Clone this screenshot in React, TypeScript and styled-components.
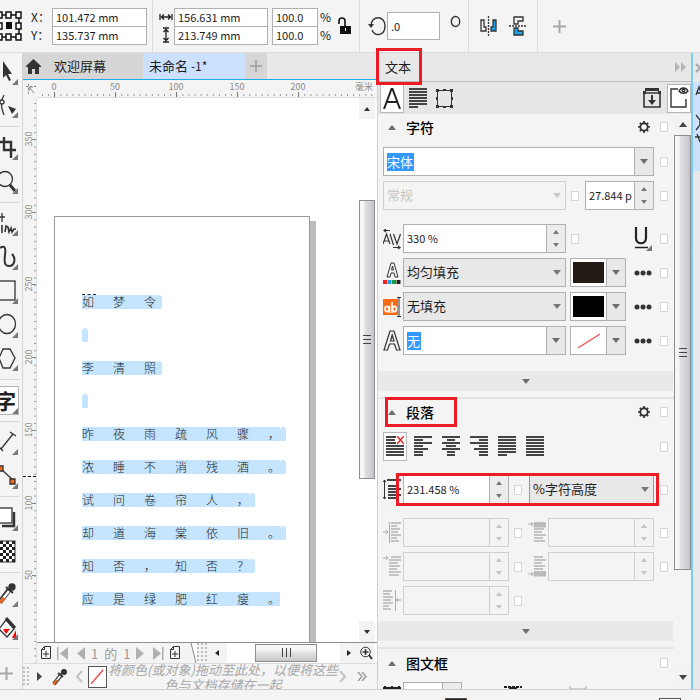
import React from "react";
import styled, { createGlobalStyle, css } from "styled-components";

const GlobalStyle = createGlobalStyle`
  * { box-sizing: border-box; }
  body { margin: 0; overflow: hidden; }
  body, button, input, select {
    font-family: "Noto Sans CJK SC", "Liberation Sans", sans-serif;
    font-size: 11px;
    color: #1c1c1c;
  }
  button { border: 0; padding: 0; background: none; display: flex; align-items: center; justify-content: center; }
  svg { display: block; flex: none; }
`;

const AppFrame = styled.div`
  display: flex;
  flex-direction: column;
  height: 100vh;
  background: #f4f4f4;
  overflow: hidden;
`;

/* ---------- property bar ---------- */

const PropertyBar = styled.header`
  display: flex;
  align-items: center;
  height: 53px;
  flex: none;
  border-bottom: 1px solid #dcdcdc;
`;

const BarGroup = styled.div<{ $gap?: number; $left?: number; $right?: number; $divided?: boolean }>`
  display: flex;
  align-items: center;
  height: 52px;
  flex: none;
  gap: ${(p) => p.$gap ?? 0}px;
  padding-left: ${(p) => p.$left ?? 0}px;
  padding-right: ${(p) => p.$right ?? 0}px;
  border-right: ${(p) => (p.$divided ? "1px solid #dcdcdc" : "0")};
`;

const Stack = styled.div<{ $width?: number }>`
  display: flex;
  flex-direction: column;
  width: ${(p) => (p.$width ? `${p.$width}px` : "auto")};
`;

const StackCell = styled.label`
  display: flex;
  align-items: center;
  height: 18px;
  font-size: 12px;
  line-height: 18px;
  white-space: nowrap;
`;

const BarInput = styled.input<{ $height?: number; $joined?: boolean }>`
  width: 100%;
  height: ${(p) => p.$height ?? 19}px;
  margin-top: ${(p) => (p.$joined ? -1 : 0)}px;
  padding: 0 3px;
  border: 1px solid #b0b0b0;
  border-radius: 0;
  background: #fff;
  outline: 0;
`;

/* ---------- tool box ---------- */

const Body = styled.div`
  display: flex;
  flex: 1;
  min-height: 0;
`;

const ToolBox = styled.nav`
  display: flex;
  flex-direction: column;
  width: 23px;
  flex: none;
  overflow: hidden;
  border-right: 1px solid #d4d4d4;
`;

const Tool = styled.button<{ $h: number }>`
  width: 20px;
  height: ${(p) => p.$h}px;
  flex: none;
  justify-content: flex-start;
`;

const TextTool = styled.button`
  position: relative;
  width: 19px;
  height: 29px;
  flex: none;
  margin: 6px 0;
  overflow: hidden;
  border: 1px solid #b4b4b4;
  border-left: 0;
  background: #fff;
  justify-content: flex-end;
  padding-right: 2px;
  font-size: 21px;
  font-weight: 700;
  line-height: 27px;
  color: #222;
  svg { position: absolute; right: 0; bottom: 0; }
`;

const ToolDivider = styled.div`
  height: 1px;
  width: 19px;
  flex: none;
  background: #d8d8d8;
`;

/* ---------- document ---------- */

const DocumentArea = styled.main`
  display: flex;
  flex-direction: column;
  flex: 1;
  min-width: 0;
  background: #f4f4f4;
`;

const TabBar = styled.div`
  display: flex;
  height: 27px;
  flex: none;
  background: #e8e8e8;
  border-bottom: 1px solid #1badea;
`;

const DocTab = styled.button<{ $active?: boolean; $width: number; $pad?: number }>`
  width: ${(p) => p.$width}px;
  height: 26px;
  background: ${(p) => (p.$active ? "#cce0ff" : "#d6d6d6")};
  justify-content: ${(p) => (p.$pad === undefined ? "center" : "flex-start")};
  padding-left: ${(p) => p.$pad ?? 0}px;
  font-size: 13px;
  line-height: 24px;
  white-space: pre;
  small { font-size: 12px; }
`;

const Workspace = styled.div`
  display: grid;
  grid-template-columns: 14px 1fr;
  grid-template-rows: 18px 1fr;
  flex: 1;
  min-height: 0;
`;

const RulerBox = styled.div<{ $vertical?: boolean }>`
  overflow: hidden;
  min-width: 0;
  min-height: 0;
  border-right: ${(p) => (p.$vertical ? "1px solid #dcdcdc" : "0")};
  border-bottom: ${(p) => (p.$vertical ? "0" : "1px solid #dcdcdc")};
  text { font-size: 9px; fill: #8a8a8a; }
`;

const View = styled.div`
  display: flex;
  flex-direction: column;
  min-width: 0;
  min-height: 0;
`;

const CanvasRow = styled.div`
  display: flex;
  flex: 1;
  min-height: 0;
  padding-right: 2px;
  background: #fff;
  border-bottom: 1px solid #8f8f8f;
`;

const Canvas = styled.div`
  flex: 1;
  min-width: 0;
  overflow: hidden;
  padding: 118px 49px 0 17px;
`;

const Page = styled.article`
  height: 100%;
  padding: 78px 0 0 27px;
  border: 1px solid #999;
  border-bottom: 0;
  box-shadow: 6px 5px 0 #bdbdbd;
  background: #fff;
`;

const PoemLine = styled.div`
  display: flex;
  align-items: flex-end;
  height: 14px;
  margin-bottom: 19px;
  font-size: 12px;
  font-weight: 300;
  line-height: 14px;
  color: #222;
`;

const Glyphs = styled.span`
  display: flex;
  gap: 19px;
  height: 14px;
  background: #c5e5ff;
  span { width: 12px; line-height: 13px; }
`;

const CaretMark = styled.div`
  width: 14px;
  margin-top: -1px;
  border-top: 1px dashed #222;
`;

const LineEnd = styled.i`
  width: 6px;
  height: 14px;
  border-radius: 3px 3px 1px 1px;
  background: #c5e5ff;
`;

const VScroll = styled.div<{ $width: number }>`
  display: flex;
  flex-direction: column;
  width: ${(p) => p.$width}px;
  flex: none;
`;

const ScrollButton = styled.button<{ $w?: number; $h?: number }>`
  width: ${(p) => (p.$w ? `${p.$w}px` : "100%")};
  height: ${(p) => p.$h ?? 21}px;
  flex: none;
  background: #f3f3f3;
`;

const Space = styled.div<{ $grow: number }>`
  flex: ${(p) => p.$grow} 1 0;
`;

const thumb = css`
  display: flex;
  align-items: center;
  justify-content: center;
  border: 1px solid #8e8e8e;
`;

const VThumb = styled.div<{ $grow: number }>`
  ${thumb}
  flex: ${(p) => p.$grow} 1 0;
  background: linear-gradient(90deg, #f6f6f6 0 25%, #dedee0 40%, #d2d2d6 75%, #c2c2c8);
`;

const HThumb = styled.div`
  ${thumb}
  width: 62px;
  height: 18px;
  background: linear-gradient(#f6f6f6 0 25%, #dedede 55%, #c8c8c8);
`;

const NavRow = styled.div`
  display: flex;
  align-items: center;
  height: 20px;
  flex: none;
  padding-right: 2px;
  background: #fff;
`;

const PageTab = styled.div`
  display: flex;
  align-items: center;
  gap: 6px;
  width: 151px;
  height: 20px;
  padding-left: 4px;
  flex: none;
  background: #f4f4f4;
`;

const PageCount = styled.span`
  display: flex;
  gap: 6px;
  font-size: 13px;
  line-height: 19px;
  color: #9a9a9a;
`;

const Grip = styled.div<{ $w: number }>`
  width: ${(p) => p.$w}px;
  height: 20px;
  flex: none;
  background: radial-gradient(circle at 1px 1px, #bdbdbd 1px, transparent 1px) 0 0 / 4px 4px #f4f4f4;
`;

const Palette = styled.div`
  display: flex;
  align-items: center;
  height: 26px;
  flex: none;
  border-top: 1px solid #dcdcdc;
  overflow: hidden;
`;

const PaletteHint = styled.p`
  flex: 1;
  height: 25px;
  margin: 0;
  overflow: hidden;
  display: flex;
  align-items: center;
  justify-content: center;
  text-align: center;
  font-size: 13px;
  font-style: italic;
  line-height: 15px;
  color: #a6a6a6;
  white-space: nowrap;
`;

const NoColor = styled.button`
  width: 19px;
  height: 22px;
  border: 1px solid #555;
  background: #fff;
`;

/* ---------- docker ---------- */

const Docker = styled.aside`
  display: flex;
  flex-direction: column;
  width: 314px;
  flex: none;
  border-left: 1px solid #d0d0d0;
`;

const DockerTitle = styled.div`
  position: relative;
  display: flex;
  align-items: center;
  justify-content: space-between;
  height: 29px;
  flex: none;
  padding: 0 5px 1px 7px;
  background: #e8e8e8;
  border-bottom: 1px solid #bcbcbc;
  font-size: 13px;
`;

const Marker = styled.span<{ $t: number; $r?: number; $b: number; $l: number; $w?: number }>`
  position: absolute;
  z-index: 2;
  top: ${(p) => p.$t}px;
  bottom: ${(p) => p.$b}px;
  left: ${(p) => p.$l}px;
  ${(p) => (p.$w ? `width: ${p.$w}px;` : `right: ${p.$r}px;`)}
  border: 3px solid #ed1c24;
  pointer-events: none;
`;

const DockerTools = styled.div`
  display: flex;
  align-items: center;
  height: 32px;
  flex: none;
  padding-left: 2px;
  background: #e6e6e6;
`;

const ModeButton = styled.button<{ $on?: boolean; $w: number }>`
  width: ${(p) => p.$w}px;
  height: 29px;
  border: 1px solid ${(p) => (p.$on ? "#b8b8b8" : "transparent")};
  background: ${(p) => (p.$on ? "#fff" : "none")};
`;

const DockerBody = styled.div`
  display: flex;
  flex: 1;
  min-height: 0;
`;

const Sections = styled.div`
  flex: 1;
  min-width: 0;
  overflow: hidden;
`;

const Section = styled.section<{ $line?: boolean }>`
  border-top: ${(p) => (p.$line ? "2px solid #e4e4e4" : "0")};
  padding: 0 6px 0 5px;
`;

const SectionHead = styled.div<{ $h: number }>`
  position: relative;
  display: flex;
  align-items: center;
  height: ${(p) => p.$h}px;
  h2 {
    flex: 1;
    margin: 0 0 0 10px;
    font-size: 14px;
    font-weight: 500;
    line-height: 20px;
    color: #000;
  }
  > svg:first-child { margin-left: 5px; }
`;

const Rows = styled.div<{ $top?: number; $gap?: number }>`
  display: flex;
  flex-direction: column;
  gap: ${(p) => p.$gap ?? 5}px;
  padding-top: ${(p) => p.$top ?? 0}px;
`;

const Row = styled.div<{ $cols: string }>`
  position: relative;
  display: grid;
  grid-template-columns: ${(p) => p.$cols};
  align-items: center;
  height: 29px;
`;

const Side = styled.div<{ $pad?: number; $between?: boolean }>`
  display: flex;
  align-items: center;
  justify-content: ${(p) => (p.$between ? "space-between" : "flex-start")};
  gap: 6px;
  padding: 0 ${(p) => (p.$between ? 2 : 0)}px 0 ${(p) => p.$pad ?? 5}px;
`;

const CheckBox = styled.input.attrs({ type: "checkbox" })`
  appearance: none;
  width: 8px;
  height: 10px;
  margin: 0;
  flex: none;
  border: 1px solid #d6d6d6;
  background: #fff;
`;

const EndCheck = styled(CheckBox)`
  justify-self: end;
`;

const Field = styled.div<{ $off?: boolean; $gray?: boolean; $focus?: boolean }>`
  display: flex;
  align-items: center;
  height: 29px;
  width: 100%;
  min-width: 0;
  border: 1px solid ${(p) => (p.$focus ? "#3fb6f0" : p.$off ? "#d0d0d0" : "#b0b0b0")};
  background: ${(p) => (p.$off ? "#f4f4f4" : p.$gray ? "#e8e8e8" : "#fff")};
`;

const TextBox = styled.input`
  flex: 1;
  min-width: 0;
  height: 27px;
  padding: 0 0 2px 3px;
  border: 0;
  outline: 0;
  background: transparent;
`;

const PickedText = styled.input<{ $w: number }>`
  width: ${(p) => p.$w}px;
  height: 18px;
  margin: 0 auto 0 3px;
  padding: 0;
  border: 0;
  outline: 0;
  background: #3399ff;
  color: #fff;
  font-size: 13px;
  line-height: 18px;
`;

const SelectWrap = styled.label<{ $off?: boolean }>`
  position: relative;
  display: flex;
  align-items: center;
  flex: 1;
  min-width: 0;
  select {
    appearance: none;
    width: 100%;
    height: 27px;
    padding: 0 0 2px 3px;
    border: 0;
    outline: 0;
    background: transparent;
    font-size: 13px;
    color: ${(p) => (p.$off ? "#c4c4c4" : "#1c1c1c")};
    opacity: 1;
  }
  svg { position: absolute; right: 4px; pointer-events: none; }
`;

const DropButton = styled.button`
  width: 19px;
  height: 27px;
  flex: none;
  border-left: 1px solid #b0b0b0;
  background: #e8e8e8;
`;

const Spinner = styled.div<{ $off?: boolean }>`
  display: flex;
  flex-direction: column;
  width: 19px;
  height: 27px;
  flex: none;
  border-left: 1px solid ${(p) => (p.$off ? "#d0d0d0" : "#b0b0b0")};
  background: ${(p) => (p.$off ? "#f4f4f4" : "#ececec")};
  button { flex: 1; }
`;

const Swatch = styled.div<{ $color: string }>`
  display: flex;
  align-items: center;
  justify-content: center;
  width: 31px;
  height: 21px;
  margin: 0 2px;
  flex: none;
  background: ${(p) => p.$color};
`;

const SwatchField = styled(Field)`
  width: 56px;
`;

const MoreBar = styled.button`
  display: flex;
  width: calc(100% - 1px);
  height: 20px;
  background: #e9e9e9;
`;

const AlignRow = styled.div`
  display: flex;
  align-items: center;
  height: 29px;
  gap: 4px;
  > input { margin-left: auto; }
`;

const SideStrip = styled.div`
  display: flex;
  flex-direction: column;
  width: 9px;
  flex: none;
  overflow: hidden;
  border-left: 2px solid #7accfa;
  background: #e8e8e8;
`;

const StripTop = styled.div`
  height: 29px;
  margin-left: -2px;
  flex: none;
  background: #e8e8e8;
  display: flex;
  align-items: center;
  justify-content: flex-end;
  overflow: hidden;
`;

const StripTab = styled.div`
  height: 89px;
  flex: none;
  background: #cce0ff;
  overflow: hidden;
`;

const StatusBar = styled.footer`
  display: flex;
  justify-content: flex-end;
  height: 11px;
  flex: none;
  padding: 8px 19px 0 0;
  gap: 192px;
  border-top: 1px solid #cfcfcf;
  overflow: hidden;
`;

const StatusSwatch = styled.div<{ $fill: string }>`
  width: 22px;
  height: 14px;
  flex: none;
  border: 1px solid #555;
  background: ${(p) => p.$fill};
`;

/* ---------- small drawings ---------- */

const Arrow = ({ dir = "down", w = 8, c = "#6e6e6e" }: { dir?: "up" | "down" | "left" | "right"; w?: number; c?: string }) => {
  const h = Math.round(w * 0.6);
  const flat = dir === "up" || dir === "down";
  const d = {
    down: `M0 0h${w}l${-w / 2} ${h}z`,
    up: `M0 ${h}h${w}l${-w / 2} ${-h}z`,
    left: `M${h} 0v${w}l${-h} ${-w / 2}z`,
    right: `M0 0v${w}l${h} ${-w / 2}z`,
  }[dir];
  return (
    <svg width={flat ? w : h} height={flat ? h : w} aria-hidden="true">
      <path d={d} fill={c} />
    </svg>
  );
};

const ToolIcon = ({ h, tri, children }: { h: number; tri?: number; children: React.ReactNode }) => (
  <svg width="20" height={h} viewBox={`0 0 20 ${h}`} fill="none" stroke="#333" strokeWidth="1.3">
    {children}
    {tri && <path d={`M18 ${tri - 6}v6h-6z`} fill="#777" stroke="none" />}
  </svg>
);

const Lines = ({ rows, color = "#444", children }: { rows: [number, number][]; color?: string; children?: React.ReactNode }) => (
  <svg width="18" height="21" viewBox="0 0 18 21">
    {rows.map(([a, b], i) => (
      <rect key={i} x={a} y={i * 3} width={b - a} height="2" fill={color} />
    ))}
    {children}
  </svg>
);

const full: [number, number] = [0, 18];
const alignments: { name: string; rows: [number, number][] }[] = [
  { name: "左", rows: [full, [0, 9], full, [0, 9], [0, 14], [0, 9], [0, 9]] },
  { name: "中", rows: [full, [5, 13], full, [4, 14], full, [5, 13], [5, 13]] },
  { name: "右", rows: [full, [9, 18], full, [9, 18], [4, 18], [9, 18], [9, 18]] },
  { name: "两端对齐", rows: [full, full, full, full, full, full, [0, 9]] },
  { name: "强制两端对齐", rows: [full, full, full, full, full, full, full] },
];

const Gear = () => (
  <svg width="12" height="12" viewBox="0 0 12 12" fill="none" stroke="#333">
    <circle cx="6" cy="6" r="3.7" strokeWidth="1.9" />
    <path d="M6 0v2M6 10v2M0 6h2M10 6h2M1.8 1.8l1.4 1.4M8.8 8.8l1.4 1.4M1.8 10.2l1.4-1.4M8.8 3.2l1.4-1.4" strokeWidth="1.7" />
  </svg>
);

const Dots = () => (
  <svg width="18" height="6" fill="#333">
    <circle cx="3" cy="3" r="2.5" />
    <circle cx="9" cy="3" r="2.5" />
    <circle cx="15" cy="3" r="2.5" />
  </svg>
);

const ThreeLines = ({ vertical }: { vertical?: boolean }) => (
  <svg width="10" height="10" stroke="#444" strokeWidth="1">
    <path d={vertical ? "M1.5 0v9M5.5 0v9M9.5 0v9" : "M1 1.5h8M1 5.5h8M1 9.5h8"} />
  </svg>
);

const Dropper = () => (
  <svg width="16" height="18" viewBox="0 0 16 18">
    <path d="M2 16 9 7" stroke="#333" strokeWidth="4" />
    <path d="M3 14.5 9 7" stroke="#fff" strokeWidth="1.8" />
    <path d="M1.5 16.5 5 12" stroke="#e8641b" strokeWidth="2.4" />
    <path d="m6 5 5 4M9 6l3-4" stroke="#333" strokeWidth="2" />
    <circle cx="12" cy="4" r="3" fill="#333" />
  </svg>
);

const PlusIcon = ({ size = 14 }: { size?: number }) => (
  <svg width={size} height={size} stroke="#a8a8a8" strokeWidth="2">
    <path d={`M${size / 2} 0v${size}M0 ${size / 2}h${size}`} />
  </svg>
);

const AddPage = () => (
  <svg width="10" height="14" fill="none" stroke="#333">
    <path d="M3.5.5h6v12h-9v-9zM.5 3.5h3v-3M5 5v6M2 8h6" />
  </svg>
);

const Range = ({ vertical }: { vertical?: boolean }) => (
  <svg width="14" height="16" viewBox="0 0 14 16" fill="none" stroke="#222" strokeWidth="1.3">
    {vertical ? (
      <path d="M4 1h6M4 15h6M7 2v12M4.5 5 7 2.5 9.5 5M4.5 11 7 13.5 9.5 11" />
    ) : (
      <path d="M1 5v6M13 5v6M2 8h10M5 5.5 2.5 8 5 10.500M9 5.5 11.5 8 9 10.5" />
    )}
  </svg>
);

const faint = "#c4c4c4";
const indentIcons: Record<string, React.ReactNode> = {
  left: (
    <Lines color={faint} rows={[[8, 18], [8, 14], [8, 17], [8, 15], [8, 18], [8, 14], [8, 16]]}>
      <path d="M6.5 0v21M0 10h4M3 8l2 2-2 2" stroke="#aaa" fill="none" />
    </Lines>
  ),
  before: (
    <Lines color={faint} rows={[[6, 18], [6, 18], [6, 16], [6, 14], [6, 18], [6, 15], [6, 17]]}>
      <path d="M6 1h12v4H6zM0 2h5M3 0l2 2-2 2" stroke="#bbb" fill="#bbb" />
    </Lines>
  ),
  first: (
    <Lines color={faint} rows={[[8, 18], [6, 18], [6, 15], [6, 17], [6, 14], [6, 18], [6, 16]]}>
      <path d="M0 2h5M3 0l2 2-2 2" stroke="#aaa" fill="none" />
    </Lines>
  ),
  after: (
    <Lines color={faint} rows={[[6, 15], [6, 18], [6, 14], [6, 17], [6, 15], [6, 18], [6, 18]]}>
      <path d="M6 16h12v4H6zM0 18h5M3 16l2 2-2 2" stroke="#bbb" fill="#bbb" />
    </Lines>
  ),
  right: (
    <Lines color={faint} rows={[[0, 9], [0, 7], [0, 10], [0, 8], [0, 10], [0, 6], [0, 8]]}>
      <path d="M12.5 0v21M13 10h5M15 8l-2 2 2 2" stroke="#aaa" fill="none" />
    </Lines>
  ),
};

/* ---------- composed controls ---------- */

const Spin = ({ off }: { off?: boolean }) => (
  <Spinner $off={off}>
    <button aria-label="增加" disabled={off}><Arrow dir="up" w={6} c={off ? "#c4c4c4" : "#777"} /></button>
    <button aria-label="减少" disabled={off}><Arrow w={6} c={off ? "#c4c4c4" : "#777"} /></button>
  </Spinner>
);

const NumberField = ({ label, value = "", off }: { label: string; value?: string; off?: boolean }) => (
  <Field $off={off}>
    <TextBox aria-label={label} defaultValue={value} disabled={off} />
    <Spin off={off} />
  </Field>
);

const SelectField = ({ label, value, off, focus }: { label: string; value: string; off?: boolean; focus?: boolean }) => (
  <Field $off={off} $gray={!off} $focus={focus}>
    <SelectWrap $off={off}>
      <select aria-label={label} disabled={off} defaultValue={value}>
        <option>{value}</option>
      </select>
      <Arrow c={off ? "#c8c8c8" : "#777"} />
    </SelectWrap>
  </Field>
);

const ColorField = ({ label, color, none }: { label: string; color: string; none?: boolean }) => (
  <SwatchField>
    <Swatch $color={color}>
      {none && <svg width="22" height="15"><path d="M0 15 22 1" stroke="#f05050" strokeWidth="1.3" /></svg>}
    </Swatch>
    <DropButton aria-label={label}><Arrow /></DropButton>
  </SwatchField>
);

const checkerCells = Array.from({ length: 35 }, (_, i) => [i % 5, Math.floor(i / 5)]).filter(([x, y]) => (x + y) % 2 === 0);

const Tools = () => (
  <ToolBox aria-label="工具箱">
    <Tool $h={35} aria-label="选择"><ToolIcon h={35} tri={32}><path d="M3 8v17l3-3 3 6 2-1-3-6h4z" fill="#333" stroke="none" /></ToolIcon></Tool>
    <Tool $h={38} aria-label="形状"><ToolIcon h={38} tri={30}><path d="M4 7C0 13 1 20 4 27" /><circle cx="2" cy="14" r="2" fill="#fff" /><path d="m8 18 8 3-4 5z" fill="#333" stroke="none" /></ToolIcon></Tool>
    <ToolDivider />
    <Tool $h={38} aria-label="裁剪"><ToolIcon h={38} tri={33}><path d="M4 10v13h12M0 15h11v16" strokeWidth="2.4" /></ToolIcon></Tool>
    <Tool $h={37} aria-label="缩放"><ToolIcon h={37} tri={29}><circle cx="5" cy="14" r="7.5" /><path d="m10 20 5 6" strokeWidth="3" /></ToolIcon></Tool>
    <ToolDivider />
    <Tool $h={35} aria-label="手绘"><ToolIcon h={35} tri={33}><path d="M2 10v9M0 14h5" /><path d="M2 22v8M5 29l1-6 2 1 1 5 2-4 1 4 2-3h2" strokeWidth="1.6" /></ToolIcon></Tool>
    <Tool $h={33} aria-label="艺术笔"><ToolIcon h={33} tri={32}><path d="M0 10c5-3 6 0 5 7-1 8 0 11 4 11 6 0 7-8 3-12" strokeWidth="2" /></ToolIcon></Tool>
    <Tool $h={33} aria-label="矩形"><ToolIcon h={33} tri={33}><rect x="-3" y="10" width="18" height="19" /></ToolIcon></Tool>
    <Tool $h={34} aria-label="椭圆"><ToolIcon h={34} tri={34}><ellipse cx="7" cy="20" rx="8.5" ry="9.5" /></ToolIcon></Tool>
    <Tool $h={41} aria-label="多边形"><ToolIcon h={41} tri={33}><path d="M3 11h7l5 9-5 10H3l-4-10z" /></ToolIcon></Tool>
    <ToolDivider />
    <TextTool aria-label="文本工具">字<svg width="6" height="6"><path d="M6 0v6H0z" fill="#777" /></svg></TextTool>
    <ToolDivider />
    <Tool $h={37} aria-label="度量"><ToolIcon h={37} tri={33}><path d="M1 27 13 12M10 10l6 4M-1 25l4 4" /></ToolIcon></Tool>
    <Tool $h={37} aria-label="连接线"><ToolIcon h={37} tri={30}><path d="m1 10 12 11" /><path d="M-1 7h4v5h-4zM10 20h5v5h-5z" fill="#f26a1b" /></ToolIcon></Tool>
    <ToolDivider />
    <Tool $h={38} aria-label="阴影"><ToolIcon h={38} tri={34}><path d="M14 15v14H2" strokeWidth="2.4" /><rect x="-2" y="11" width="14" height="15" fill="#fff" /></ToolIcon></Tool>
    <Tool $h={37} aria-label="透明度">
      <ToolIcon h={37}>
        <rect x="-1" y="6" width="16" height="21" fill="#fff" strokeWidth="1" />
        {checkerCells.map(([x, y]) => (
          <rect key={`${x}-${y}`} x={x * 3} y={6 + y * 3} width="3" height="3" fill="#222" stroke="none" />
        ))}
      </ToolIcon>
    </Tool>
    <ToolDivider />
    <Tool $h={37} aria-label="滴管"><ToolIcon h={37} tri={34}><path d="M0 29 9 17" strokeWidth="5" /><path d="M1 28 9 18" stroke="#fff" strokeWidth="2.4" /><path d="m0 30 4-5" stroke="#e8641b" strokeWidth="3" /><path d="m6 14 7 6" strokeWidth="2" /><circle cx="12" cy="14" r="3" fill="#333" /></ToolIcon></Tool>
    <Tool $h={38} aria-label="填充"><ToolIcon h={38} tri={30}><path d="m6 10 8 9-7 8-8-8z" fill="#fff" /><path d="m6 8 9 10" strokeWidth="3" /><path d="M3 19h7l-4 5z" fill="red" stroke="none" /><path d="M16 20v8h-4z" fill="red" stroke="none" /></ToolIcon></Tool>
    <ToolDivider />
    <Tool $h={48} aria-label="添加"><PlusIcon size={13} /></Tool>
  </ToolBox>
);

const HRuler = () => (
  <svg width="100%" height="17">
    {Array.from({ length: 140 }, (_, i) => (
      <path key={i} d={`M${5.5 + i * 6.1} 14v2`} stroke="#9a9a9a" />
    ))}
    {Array.from({ length: 5 }, (_, i) => (
      <g key={i}>
        <path d={`M${17.5 + i * 61} 12v5`} stroke="#777" />
        <text x={17 + i * 61} y="10" textAnchor="middle">{i * 50}</text>
      </g>
    ))}
    <text x="318" y="10">毫米</text>
  </svg>
);

const VRuler = () => (
  <svg width="14" height="100%">
    {Array.from({ length: 90 }, (_, i) => (
      <path key={i} d={`M11 ${5.5 + i * 7.27}h2`} stroke="#9a9a9a" />
    ))}
    {[350, 300, 250, 200, 150, 100, 50].map((n, i) => (
      <g key={n} transform={`translate(0 ${Math.round(41 + i * 72.7)})`}>
        <path d="M9 .5h4" stroke="#888" />
        <text transform="rotate(-90)" x="0" y="9" textAnchor="middle">{n}</text>
      </g>
    ))}
    <path d="M0 378.5h14" stroke="#111" strokeDasharray="3 2" />
  </svg>
);

const poem: [string, boolean][] = [
  ["如梦令", true],
  ["", true],
  ["李清照", true],
  ["", true],
  ["昨夜雨疏风骤，", true],
  ["浓睡不消残酒。", true],
  ["试问卷帘人，", true],
  ["却道海棠依旧。", true],
  ["知否，知否？", true],
  ["应是绿肥红瘦。", false],
];

const NavArrow = ({ dir, bar }: { dir: "left" | "right"; bar?: boolean }) => (
  <svg width="11" height="13" fill="#b0b0b0">
    <path d={dir === "left" ? "M11 0v13L3 6.5z" : "M0 0v13l8-6.5z"} />
    {bar && <rect x={dir === "left" ? 0 : 9} width="1.5" height="13" />}
  </svg>
);

const DocumentView = () => (
  <DocumentArea>
    <TabBar>
      <DocTab $width={20} aria-label="主页"><svg width="15" height="15"><path d="M7.5 0 15 7v1h-2v7H9v-5H6v5H2V8H0V7z" fill="#333" /></svg></DocTab>
      <DocTab $width={100} $pad={11}>欢迎屏幕</DocTab>
      <DocTab $width={102} $pad={6} $active>未命名 <small>-1*</small></DocTab>
      <DocTab $width={22} aria-label="新建"><PlusIcon size={12} /></DocTab>
    </TabBar>
    <Workspace>
      <svg width="14" height="18" fill="none" stroke="#888"><path d="M5.500 4v12M3 6.500h10" strokeDasharray="2 2" /><path d="m6 7 5 6M6 11V7h4" /></svg>
      <RulerBox><HRuler /></RulerBox>
      <RulerBox $vertical><VRuler /></RulerBox>
      <View>
        <CanvasRow>
          <Canvas>
            <Page>
              <CaretMark />
              {poem.map(([line, end], i) => (
                <PoemLine key={i}>
                  {line && <Glyphs>{[...line].map((c, j) => <span key={j}>{c}</span>)}</Glyphs>}
                  {end && <LineEnd />}
                </PoemLine>
              ))}
            </Page>
          </Canvas>
          <VScroll $width={16}>
            <ScrollButton aria-label="向上"><Arrow dir="up" w={6} c="#333" /></ScrollButton>
            <Space $grow={81} />
            <VThumb $grow={279}><ThreeLines /></VThumb>
            <Space $grow={143} />
            <ScrollButton aria-label="向下"><Arrow w={6} c="#333" /></ScrollButton>
          </VScroll>
        </CanvasRow>
        <NavRow>
          <PageTab>
            <AddPage />
            <NavArrow dir="left" bar />
            <NavArrow dir="left" />
            <PageCount><span>1</span><span>的</span><span>1</span></PageCount>
            <NavArrow dir="right" />
            <NavArrow dir="right" bar />
            <AddPage />
          </PageTab>
          <svg width="9" height="20"><path d="M0 0h3l5 20H0z" fill="#f4f4f4" /><path d="m3 0 5 20" stroke="#888" /></svg>
          <Grip $w={10} />
          <ScrollButton $w={20} $h={20} aria-label="向左"><Arrow dir="left" w={6} c="#222" /></ScrollButton>
          <Space $grow={29} />
          <HThumb><ThreeLines vertical /></HThumb>
          <Space $grow={23} />
          <ScrollButton $w={17} $h={20} aria-label="向右"><Arrow dir="right" w={6} c="#222" /></ScrollButton>
          <ScrollButton $w={18} $h={20} aria-label="导航器">
            <svg width="13" height="14" fill="none" stroke="#333"><circle cx="5.5" cy="6" r="4.8" /><path d="M5.5 3v6M2.5 6h6" strokeWidth="1.5" /><path d="m9 9 3 4" strokeWidth="2" /></svg>
          </ScrollButton>
        </NavRow>
      </View>
    </Workspace>
    <Palette>
      <Grip $w={6} />
      <BarGroup $left={8} $right={10}><Arrow dir="right" w={9} c="#444" /></BarGroup>
      <Dropper />
      <BarGroup $left={8} $right={5}><svg width="7" height="13" fill="none" stroke="#c4c4c4" strokeWidth="2"><path d="M6 1 1 6.5 6 12" /></svg></BarGroup>
      <NoColor aria-label="无颜色"><svg width="13" height="15"><path d="M0 15 12 1" stroke="#f04040" strokeWidth="1.3" /></svg></NoColor>
      <PaletteHint>将颜色(或对象)拖动至此处，以便将这些<br />色与文档存储在一起</PaletteHint>
      <BarGroup $gap={11} $right={10}>
        <svg width="7" height="13" fill="none" stroke="#c4c4c4" strokeWidth="2"><path d="m1 1 5 5.5L1 12" /></svg>
        <svg width="10" height="9" fill="none" stroke="#999" strokeWidth="1.4"><path d="m1 0 4 4.5L1 9M5 0l4 4.5L5 9" /></svg>
      </BarGroup>
    </Palette>
  </DocumentArea>
);

const charCols = "20px 1fr 88px 14px";
const paraCols = "20px 1fr 39px 1fr 14px";

const TextDocker = () => (
  <Docker>
    <DockerTitle>
      <span>文本</span>
      <Marker $t={-5} $b={-4} $l={-2} $w={46} />
      <svg width="11" height="10" fill="#b4b4b4"><path d="M0 0v10l5-5zM6 0v10l5-5z" /></svg>
    </DockerTitle>
    <DockerTools>
      <ModeButton $w={24} $on aria-label="字符">
        <svg width="18" height="21" fill="none" stroke="#222" strokeWidth="2"><path d="m1 21 7.5-20h1L17 21M4 14h10" /></svg>
      </ModeButton>
      <ModeButton $w={28} aria-label="段落">
        <Lines rows={[full, full, full, full, full, full, [0, 9]]} />
      </ModeButton>
      <ModeButton $w={24} aria-label="图文框">
        <svg width="19" height="21" fill="none" stroke="#333"><rect x="2.5" y="2.5" width="14" height="16" /><path d="M1 1h3v3H1zM15 1h3v3h-3zM1 17h3v3H1zM15 17h3v3h-3zM8 1h3v2H8zM8 18h3v2H8zM1 9h2v3H1zM16 9h2v3h-2z" fill="#333" stroke="none" /></svg>
      </ModeButton>
      <Space $grow={1} />
      <ModeButton $w={24} aria-label="导入">
        <svg width="18" height="20" fill="none" stroke="#333"><path d="M1 5h16v14H1z" strokeWidth="1.6" /><path d="M0 6V3h2V0h14v3h2v3h-3V3H3v3z" fill="#333" stroke="none" /><path d="M9 7v6" strokeWidth="2" /><path d="M5 12h8l-4 5z" fill="#333" stroke="none" /></svg>
      </ModeButton>
      <BarGroup $left={3} />
      <ModeButton $w={24} $on aria-label="显示">
        <svg width="19" height="22" fill="none" stroke="#333" strokeWidth="1.4"><path d="M8 2H1v18h15V12" /><path d="M9 4c2-4 7-4 9 0-2 3-7 3-9 0z" /><circle cx="13.5" cy="3.5" r="1.3" /></svg>
      </ModeButton>
    </DockerTools>
    <DockerBody>
      <Sections>
        <Section>
          <SectionHead $h={26}>
            <Arrow dir="up" />
            <h2>字符</h2>
            <BarGroup $gap={10}><Gear /><CheckBox aria-label="字符样式" /></BarGroup>
          </SectionHead>
          <Rows $top={7}>
            <Row $cols="1fr 14px">
              <Field>
                <PickedText $w={27} aria-label="字体" defaultValue="宋体" />
                <DropButton aria-label="字体列表"><Arrow /></DropButton>
              </Field>
              <EndCheck aria-label="锁定字体" />
            </Row>
            <Row $cols="1fr 88px 14px">
              <SelectField label="字体样式" value="常规" off />
              <Side><CheckBox aria-label="锁定样式" /><NumberField label="字体大小" value="27.844 p" /></Side>
              <EndCheck aria-label="锁定大小" />
            </Row>
          </Rows>
          <Rows $top={14}>
            <Row $cols={charCols}>
              <svg width="18" height="20" fill="none" stroke="#333" strokeWidth="1.2"><path d="M0 15 3.500 5 7 15M1.500 12h4M7 5l3.500 11M10.500 5 14 15l3.500-10" /><path d="M1 1.500h6M3 0 1 1.500 3 3M10 18.500h7M15 17l2 1.500-2 1.500" /></svg>
              <NumberField label="字距调整" value="330 %" />
              <Side $between><CheckBox aria-label="锁定字距" />
                <svg width="19" height="24" fill="none" stroke="#222"><path d="M3 0v11c0 7 10 7 10 0V0" strokeWidth="2.2" /><path d="M2 20.5h13" strokeWidth="1.5" /><path d="M19 18v6h-6z" fill="#777" stroke="none" /></svg>
              </Side>
              <EndCheck aria-label="锁定下划线" />
            </Row>
            <Row $cols={charCols}>
              <svg width="18" height="22"><path d="m4 15 4-14h3l4 14h-3l-1-4H8l-1 4zM8.5 8h2l-1-4z" fill="none" stroke="#333" /><path d="M0 18h4v4H0z" fill="#e22" /><path d="M4.5 18h4v4h-4z" fill="#19a0e8" /><path d="M9 18h4v4H9z" fill="#1b9a3a" /><path d="M13.5 18h4v4h-4z" fill="#222" /></svg>
              <SelectField label="填充类型" value="均匀填充" />
              <Side $between $pad={4}><ColorField label="填充颜色" color="#231a16" /><Dots /></Side>
              <EndCheck aria-label="锁定填充" />
            </Row>
            <Row $cols={charCols}>
              <svg width="18" height="20" fill="none"><path d="M0 2h15v16H0z" fill="#fb6a12" /><ellipse cx="4" cy="12" rx="2" ry="2.6" stroke="#fff" strokeWidth="1.6" /><path d="M6.5 9v7M9 5v11" stroke="#fff" strokeWidth="1.6" /><ellipse cx="11.5" cy="12" rx="2" ry="2.6" stroke="#fff" strokeWidth="1.6" /><path d="M14 .5h4M14 19.5h4M16 1v18" stroke="#333" /></svg>
              <SelectField label="背景填充类型" value="无填充" />
              <Side $between $pad={4}><ColorField label="背景颜色" color="#000" /><Dots /></Side>
              <EndCheck aria-label="锁定背景" />
            </Row>
            <Row $cols={charCols}>
              <svg width="18" height="21"><path d="M1 20 7 1h4l6 19h-3.5l-2-6h-5l-2 6zM7.5 11h3.500L9.2 5z" fill="none" stroke="#333" strokeWidth="1.2" /></svg>
              <Field>
                <PickedText $w={14} aria-label="轮廓宽度" defaultValue="无" />
                <DropButton aria-label="轮廓宽度列表"><Arrow /></DropButton>
              </Field>
              <Side $between $pad={4}><ColorField label="轮廓颜色" color="#fff" none /><Dots /></Side>
              <EndCheck aria-label="锁定轮廓" />
            </Row>
          </Rows>
          <Rows $top={16} />
        </Section>
        <MoreBar aria-label="更多字符选项"><Arrow /></MoreBar>
        <Rows $top={6} />
        <Section $line>
          <SectionHead $h={26}>
            <Arrow dir="up" />
            <h2>段落</h2>
            <BarGroup $gap={10}><Gear /><CheckBox aria-label="段落样式" /></BarGroup>
            <Marker $t={-2} $b={-2} $l={2} $w={72} />
          </SectionHead>
          <Rows $top={7} $gap={14}>
            <AlignRow>
              <ModeButton $w={24} $on aria-label="无对齐">
                <Lines rows={[[0, 10], [0, 9], [0, 10], full, full, full, full]}>
                  <path d="m11 0 7 8M18 0l-7 8" stroke="#e22" strokeWidth="1.4" />
                </Lines>
              </ModeButton>
              {alignments.map((a) => (
                <ModeButton key={a.name} $w={24} aria-label={a.name}><Lines rows={a.rows} /></ModeButton>
              ))}
              <CheckBox aria-label="锁定对齐" />
            </AlignRow>
            <Row $cols="20px 106fr 20px 125fr 14px">
              <Lines rows={[[4, 18], [4, 4], [5, 16], [5, 18], [5, 15], [5, 18], [5, 14]]}>
                <path d="M1.5 1v19M0 3l1.5-2L3 3M0 18l1.5 2L3 18" stroke="#333" fill="none" />
              </Lines>
              <NumberField label="行间距" value="231.458 %" />
              <Side><CheckBox aria-label="锁定行距" /></Side>
              <SelectField label="行间距单位" value="%字符高度" focus />
              <EndCheck aria-label="锁定单位" />
              <Marker $t={-2} $b={-2} $l={13} $r={9} />
            </Row>
            <Rows>
              <Row $cols={paraCols}>
                {indentIcons.left}
                <NumberField label="左行缩进" off />
                <Side><CheckBox aria-label="锁定左缩进" />{indentIcons.before}</Side>
                <NumberField label="段前间距" off />
                <EndCheck aria-label="锁定段前间距" />
              </Row>
              <Row $cols={paraCols}>
                {indentIcons.first}
                <NumberField label="首行缩进" off />
                <Side><CheckBox aria-label="锁定首行缩进" />{indentIcons.after}</Side>
                <NumberField label="段后间距" off />
                <EndCheck aria-label="锁定段后间距" />
              </Row>
              <Row $cols={paraCols}>
                {indentIcons.right}
                <NumberField label="右行缩进" off />
                <Side><CheckBox aria-label="锁定右缩进" /></Side>
              </Row>
            </Rows>
          </Rows>
          <Rows $top={6} />
        </Section>
        <MoreBar aria-label="更多段落选项"><Arrow /></MoreBar>
        <Rows $top={6} />
        <Section $line>
          <SectionHead $h={28}>
            <Arrow dir="up" />
            <h2>图文框</h2>
            <CheckBox aria-label="图文框样式" />
          </SectionHead>
          <Rows $top={5}>
            <Row $cols="20px 59px 42px 65px 1fr">
              <svg width="18" height="28" fill="none" stroke="#222" strokeWidth="2"><path d="M0 5h18M2 3v24M9 3v4M16 3v24" /></svg>
              <Field><TextBox aria-label="列数" /><Spinner /></Field>
              <span />
              <svg width="18" height="28" fill="none" stroke="#222" strokeWidth="2"><path d="M0 4h18" strokeDasharray="3 1" /><path d="M5 5h8" /></svg>
              <svg width="18" height="28" fill="none" stroke="#aaa"><path d="M1 3v3h16V3" /></svg>
            </Row>
          </Rows>
        </Section>
      </Sections>
      <VScroll $width={17}>
        <ScrollButton aria-label="面板向上"><Arrow dir="up" c="#444" /></ScrollButton>
        <VThumb $grow={435}><ThreeLines /></VThumb>
        <Space $grow={96} />
        <ScrollButton $h={24} aria-label="面板向下"><Arrow c="#444" /></ScrollButton>
      </VScroll>
    </DockerBody>
  </Docker>
);

export default function App() {
  return (
    <AppFrame>
      <GlobalStyle />
      <PropertyBar>
        <BarGroup $right={9}>
          <svg width="22" height="31" fill="none" stroke="#111" strokeWidth="1.5">
            <path d="M0 4h20M0 26h20M19 4v22" />
            <path d="M-3 1h5v6h-5zM6 1h5v6H6zM16 1h5v6h-5zM-3 12h5v6h-5zM16 12h5v6h-5zM-3 23h5v6h-5zM6 23h5v6H6zM16 23h5v6h-5z" fill="#fff" />
            <path d="M6 11h6v7H6z" fill="#111" stroke="none" />
          </svg>
        </BarGroup>
        <BarGroup $right={5} $divided>
          <Stack $width={21}>
            <StackCell htmlFor="pos-x">X：</StackCell>
            <StackCell htmlFor="pos-y">Y：</StackCell>
          </Stack>
          <Stack $width={95}>
            <BarInput id="pos-x" defaultValue="101.472 mm" />
            <BarInput id="pos-y" $joined defaultValue="135.737 mm" />
          </Stack>
        </BarGroup>
        <BarGroup $left={6} $right={8} $divided>
          <Stack $width={15}>
            <StackCell><Range /></StackCell>
            <StackCell><Range vertical /></StackCell>
          </Stack>
          <Stack $width={94}>
            <BarInput aria-label="宽度" defaultValue="156.631 mm" />
            <BarInput aria-label="高度" $joined defaultValue="213.749 mm" />
          </Stack>
          <BarGroup $left={4} $right={2}>
            <Stack $width={46}>
              <BarInput id="scale-x" defaultValue="100.0" />
              <BarInput id="scale-y" $joined defaultValue="100.0" />
            </Stack>
          </BarGroup>
          <Stack $width={18}>
            <StackCell htmlFor="scale-x">%</StackCell>
            <StackCell htmlFor="scale-y">%</StackCell>
          </Stack>
          <button aria-label="锁定比率">
            <svg width="13" height="18" fill="none"><path d="M1 7V4c0-4 6-4 6 0v6" stroke="#111" strokeWidth="1.6" /><rect x="2" y="9" width="11" height="8" fill="#111" /><path d="M7.5 11v3" stroke="#fff" /></svg>
          </button>
        </BarGroup>
        <BarGroup $left={8} $right={7} $divided>
          <svg width="19" height="22" fill="none" stroke="#333" strokeWidth="1.4"><path d="M3 11c0-11 14-11 14 0 0 10-10 11-13 4" /><path d="m0 9 6 0-3 4z" fill="#333" stroke="none" /></svg>
          <Stack $width={53}><BarInput aria-label="旋转角度" $height={28} defaultValue=".0" /></Stack>
          <BarGroup $left={10} $right={0}><svg width="11" height="22" fill="none" stroke="#333" strokeWidth="1.4"><ellipse cx="5.5" cy="6.5" rx="4.2" ry="5" /></svg></BarGroup>
        </BarGroup>
        <BarGroup $left={11} $right={11} $gap={12} $divided>
          <button aria-label="水平镜像">
            <svg width="17" height="22" fill="none" stroke="#333" strokeWidth="1.3"><path d="M1 5h3v7h2v4H1z" /><path d="M16 5h-3v7h-2v4h5z" fill="#19a5ea" /><path d="M8.5 1v20" strokeDasharray="2 1" /></svg>
          </button>
          <button aria-label="垂直镜像">
            <svg width="17" height="22" fill="none" stroke="#333" strokeWidth="1.3"><path d="M5 2h9v4H9v3H5z" /><path d="M5 20h9v-4H9v-3H5z" fill="#19a5ea" /><path d="M0 11h17" strokeDasharray="2 1" /></svg>
          </button>
        </BarGroup>
        <BarGroup $left={15}>
          <button aria-label="自定义"><PlusIcon size={13} /></button>
        </BarGroup>
      </PropertyBar>
      <Body>
        <Tools />
        <DocumentView />
        <TextDocker />
        <SideStrip>
          <StripTop><svg width="5" height="10" fill="none" stroke="#aaa" strokeWidth="2"><path d="m1 1 8 8M1 9l8-8" /></svg></StripTop>
          <StripTab>
            <svg width="7" height="70" fill="none" stroke="#333" strokeWidth="1.3"><path d="m3 13 3-8 2 6M4 11h4M3 33l4 5v5l-4 5M2 55h5M4 52l3 8" /></svg>
          </StripTab>
        </SideStrip>
      </Body>
      <StatusBar>
        <StatusSwatch $fill="#231a16" />
        <StatusSwatch $fill="#fff" />
      </StatusBar>
    </AppFrame>
  );
}
